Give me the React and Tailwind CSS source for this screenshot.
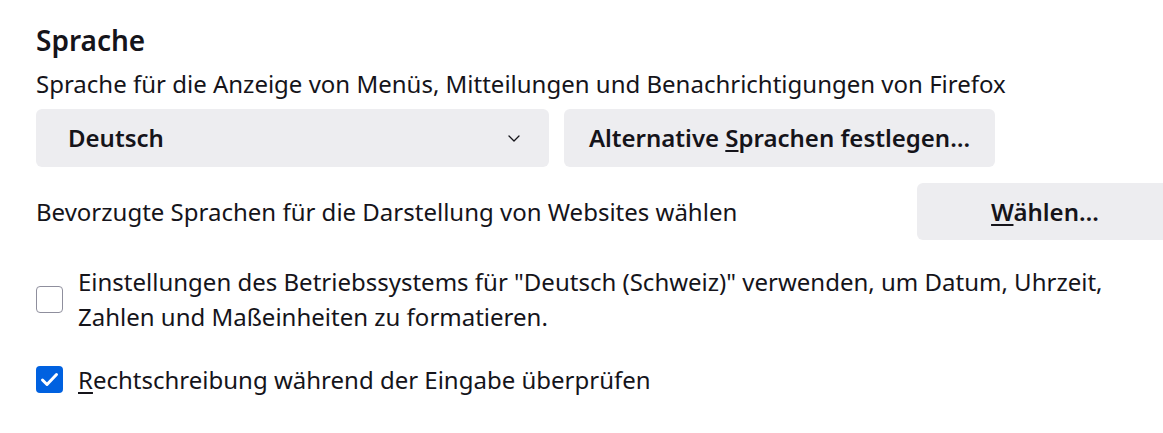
import React from "react";

const font = { fontFamily: '"Noto Sans", "Open Sans", sans-serif' };

function Chevron() {
  return (
    <svg width="12" height="7" viewBox="0 0 12 7" fill="none" className="shrink-0">
      <path d="M1 1l5 5 5-5" stroke="#15141a" strokeWidth="1.3" strokeLinecap="round" strokeLinejoin="round" />
    </svg>
  );
}

function Checkbox({ checked }) {
  return checked ? (
    <div className="w-[27px] h-[27px] shrink-0 rounded-[4px] bg-[#0061e0]">
      <svg width="27" height="27" viewBox="0 0 27 27" fill="none">
        <path d="M6.5 14l4.5 4.5 9.5-10" stroke="white" strokeWidth="3" strokeLinecap="round" strokeLinejoin="round" />
      </svg>
    </div>
  ) : (
    <div className="w-[27px] h-[27px] shrink-0 rounded-[4px] border border-[#8f8f9d] bg-white" />
  );
}

export default function App() {
  return (
    <div className="w-[1163px] h-[433px] overflow-hidden bg-white text-[#15141a]" style={font}>
      <div className="w-[1173px] pl-[36px] pt-[23px]">
        <h2 className="text-[28px] leading-[34px] font-semibold">Sprache</h2>
        <p className="mt-[12px] text-[24px] leading-[30px]">
          Sprache für die Anzeige von Menüs, Mitteilungen und Benachrichtigungen von Firefox
        </p>

        <div className="mt-[10px] flex gap-[15px]">
          <div className="w-[513px] h-[58px] rounded-[6px] bg-[#ededf0] flex items-center justify-between pl-[32px] pr-[29px]">
            <span className="text-[24px] font-semibold">Deutsch</span>
            <Chevron />
          </div>
          <button className="h-[58px] w-[431px] rounded-[6px] bg-[#ededf0] text-[24px] font-semibold flex items-center justify-center">
            <span>
              Alternative <u className="underline-offset-[3px]">S</u>prachen festlegen…
            </span>
          </button>
        </div>

        <div className="mt-[16px] flex items-center justify-between">
          <span className="text-[24px] leading-[30px]">Bevorzugte Sprachen für die Darstellung von Websites wählen</span>
          <button className="h-[57px] w-[256px] rounded-[6px] bg-[#ededf0] text-[24px] font-semibold flex items-center justify-center">
            <span>
              <u className="underline-offset-[3px]">W</u>ählen…
            </span>
          </button>
        </div>

        <div className="mt-[24px] flex items-center gap-[15px]">
          <Checkbox checked={false} />
          <p className="text-[24px] leading-[35px]">
            Einstellungen des Betriebssystems für "Deutsch (Schweiz)" verwenden, um Datum, Uhrzeit,
            <br />
            Zahlen und Maßeinheiten zu formatieren.
          </p>
        </div>

        <div className="mt-[28px] flex items-center gap-[15px]">
          <Checkbox checked />
          <p className="text-[24px] leading-[35px]">
            <u className="underline-offset-[3px]">R</u>echtschreibung während der Eingabe überprüfen
          </p>
        </div>
      </div>
    </div>
  );
}
